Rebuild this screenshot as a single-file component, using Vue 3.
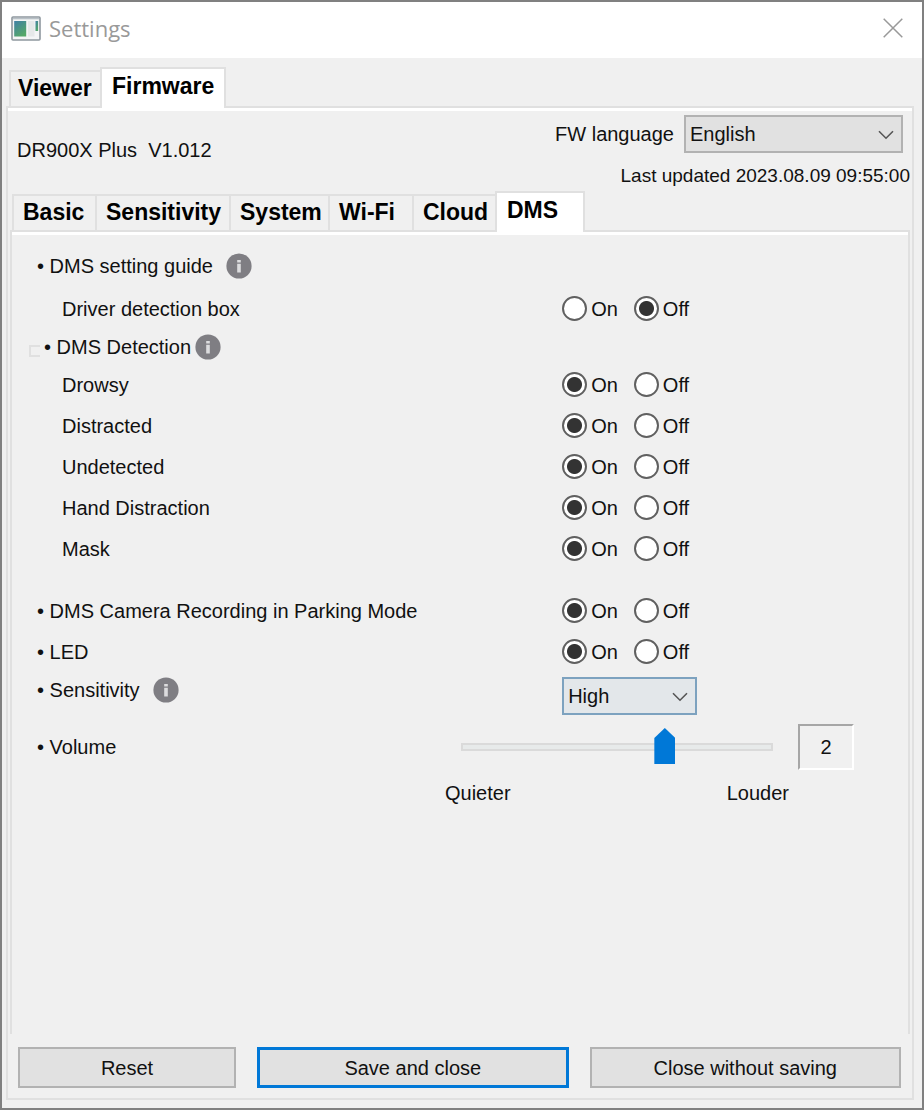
<script setup>
import { ref, reactive } from 'vue'

const mainTabs = ['Viewer', 'Firmware']
const activeMain = ref('Firmware')
const subTabs = ['Basic', 'Sensitivity', 'System', 'Wi-Fi', 'Cloud', 'DMS']
const activeSub = ref('DMS')

const language = ref('English')
const sensitivity = ref('High')
const volume = ref(2)

const rows = reactive([
  { id: 'guide', kind: 'guide', label: '• DMS setting guide', info: true },
  { id: 'box', kind: 'box', label: 'Driver detection box', value: 'Off' },
  { id: 'detection', kind: 'group', label: '• DMS Detection', info: true },
  { id: 'drowsy', kind: 'sub', label: 'Drowsy', value: 'On' },
  { id: 'distracted', kind: 'sub', label: 'Distracted', value: 'On' },
  { id: 'undetected', kind: 'sub', label: 'Undetected', value: 'On' },
  { id: 'hand', kind: 'sub', label: 'Hand Distraction', value: 'On' },
  { id: 'mask', kind: 'sub last', label: 'Mask', value: 'On' },
  { id: 'parking', kind: 'top', label: '• DMS Camera Recording in Parking Mode', value: 'On' },
  { id: 'led', kind: 'top', label: '• LED', value: 'On' },
])
</script>

<template>
  <main class="window">
    <header class="titlebar">
      <svg class="app-icon" viewBox="0 0 30 25" aria-hidden="true">
        <defs>
          <linearGradient id="screen" x1="0" y1="0" x2="0.6" y2="1">
            <stop offset="0" stop-color="#3f7fa6" />
            <stop offset="1" stop-color="#55a868" />
          </linearGradient>
        </defs>
        <rect x="1" y="1" width="28" height="23" rx="1" fill="#f4f5f6" stroke="#8f989f" stroke-width="1.6" />
        <path d="M2 2.6H28" stroke="#b9c1c7" stroke-width="1.4" />
        <rect x="3.2" y="5" width="12" height="15.5" fill="url(#screen)" />
        <rect x="17" y="5" width="6.5" height="15.5" fill="#e6e8e9" />
        <rect x="24.5" y="5" width="2.6" height="10" fill="url(#screen)" />
      </svg>
      <h1>Settings</h1>
      <button class="close" type="button" aria-label="Close">
        <svg viewBox="0 0 20 20" aria-hidden="true">
          <path d="M0.7 0.7L19.3 19.3M19.3 0.7L0.7 19.3" fill="none" stroke="#999" stroke-width="1.5" />
        </svg>
      </button>
    </header>

    <div class="body">
      <div class="tabs main-tabs" role="tablist">
        <button
          v-for="tab in mainTabs"
          :key="tab"
          type="button"
          role="tab"
          class="tab"
          :class="{ active: tab === activeMain }"
          :aria-selected="tab === activeMain"
          @click="activeMain = tab"
        >{{ tab }}</button>
      </div>

      <section class="panel outer">
        <div class="device">
          <p class="model">DR900X Plus&nbsp; V1.012</p>
          <div class="firmware">
            <div class="language">
              <label for="language">FW language</label>
              <div class="select wide">
                <select id="language" v-model="language">
                  <option>English</option>
                </select>
                <svg class="chevron" viewBox="0 0 16 10" aria-hidden="true">
                  <path d="M1 1.2L8 8.2L15 1.2" fill="none" stroke="#555" stroke-width="1.6" />
                </svg>
              </div>
            </div>
            <p class="updated">Last updated 2023.08.09 09:55:00</p>
          </div>
        </div>

        <div class="tabs sub-tabs" role="tablist">
          <button
            v-for="tab in subTabs"
            :key="tab"
            type="button"
            role="tab"
            class="tab"
            :class="{ active: tab === activeSub }"
            :aria-selected="tab === activeSub"
            @click="activeSub = tab"
          >{{ tab }}</button>
        </div>

        <section class="panel inner">
          <div v-for="row in rows" :key="row.id" class="row" :class="row.kind">
            <div class="name">
              <span v-if="row.kind === 'group'" class="bracket"></span>
              <span :id="row.id">{{ row.label }}</span>
              <svg v-if="row.info" class="info" viewBox="0 0 26 26" aria-hidden="true">
                <circle cx="13" cy="13" r="12.6" fill="#7f7e83" />
                <path d="M11.2 7H14.8V9.6H11.2ZM11.2 10.8H14.8V19.4H11.2Z" fill="#dcdcde" />
              </svg>
            </div>
            <div v-if="row.value" class="choices" role="radiogroup" :aria-labelledby="row.id">
              <label v-for="option in ['On', 'Off']" :key="option">
                <input v-model="row.value" type="radio" :name="row.id" :value="option" />
                {{ option }}
              </label>
            </div>
          </div>

          <div class="row sensitivity">
            <div class="name">
              <label for="sensitivity">• Sensitivity</label>
              <svg class="info" viewBox="0 0 26 26" aria-hidden="true">
                <circle cx="13" cy="13" r="12.6" fill="#7f7e83" />
                <path d="M11.2 7H14.8V9.6H11.2ZM11.2 10.8H14.8V19.4H11.2Z" fill="#dcdcde" />
              </svg>
            </div>
            <div class="select short">
              <select id="sensitivity" v-model="sensitivity">
                <option>High</option>
                <option>Medium</option>
                <option>Low</option>
              </select>
              <svg class="chevron" viewBox="0 0 16 10" aria-hidden="true">
                <path d="M1 1.2L8 8.2L15 1.2" fill="none" stroke="#555" stroke-width="1.6" />
              </svg>
            </div>
          </div>

          <div class="volume">
            <label for="volume">• Volume</label>
            <input id="volume" v-model.number="volume" type="range" min="0" max="3" step="1" />
            <output for="volume">{{ volume }}</output>
            <div class="scale">
              <span>Quieter</span>
              <span>Louder</span>
            </div>
          </div>
        </section>

        <footer class="actions">
          <button type="button">Reset</button>
          <button type="button" class="primary">Save and close</button>
          <button type="button">Close without saving</button>
        </footer>
      </section>
    </div>
  </main>
</template>

<style>
body {
  margin: 0;
  background: #f0f0f0;
}
</style>

<style scoped>
* {
  box-sizing: border-box;
}

.window {
  display: flex;
  flex-direction: column;
  min-height: 100vh;
  border: 2px solid #808080;
  background: #f0f0f0;
  color: #111;
  font: 20px/24px "Liberation Sans", Arial, sans-serif;
}

button,
select {
  font: inherit;
  color: inherit;
  border-radius: 0;
}

p,
h1 {
  margin: 0;
}

.titlebar {
  display: flex;
  align-items: center;
  height: 56px;
  padding: 0 19px 4px 9px;
  background: #fff;
}

.app-icon {
  width: 30px;
  height: 25px;
}

h1 {
  flex: 1;
  margin-left: 8px;
  color: #999;
  font: 400 22px/30px "Open Sans", "Noto Sans", sans-serif;
}

.close {
  display: flex;
  padding: 0;
  border: 0;
  background: none;
}

.close svg {
  width: 20px;
  height: 20px;
}

.body {
  display: flex;
  flex: 1;
  flex-direction: column;
  padding: 9px 8px 8px 4px;
}

.tabs {
  display: grid;
  align-items: end;
  height: 41px;
  margin-bottom: -2px;
}

.main-tabs {
  grid-template-columns: 91px 126px;
  padding-left: 3px;
}

.sub-tabs {
  grid-template-columns: 83px 134px 99px 84px 83px 90px;
  margin-top: 3px;
  padding-left: 4px;
}

.tab {
  height: 38px;
  padding: 0 0 2px 9px;
  border: 2px solid #e0e0e0;
  border-right-width: 0;
  background: #f0f0f0;
  color: #000;
  font-size: 23px;
  font-weight: 700;
  text-align: left;
  white-space: nowrap;
}

.main-tabs .tab {
  padding-left: 7px;
}

.tabs .tab.active {
  position: relative;
  z-index: 1;
  height: 41px;
  padding-bottom: 6px;
  padding-left: 10px;
  border-right-width: 2px;
  border-bottom: 0;
  background: #fff;
}

.panel {
  display: flex;
  flex: 1;
  flex-direction: column;
  border: 2px solid #e0e0e0;
  box-shadow: inset 0 3px #fff;
}

.device {
  display: flex;
  align-items: center;
  justify-content: space-between;
  padding: 7px 2px 0 9px;
}

.model {
  padding-bottom: 3px;
}

.firmware {
  display: flex;
  flex-direction: column;
  align-items: flex-end;
  gap: 11px;
}

.language {
  display: flex;
  align-items: center;
  gap: 10px;
  padding-right: 7px;
}

.updated {
  font-size: 19px;
}

.select {
  position: relative;
  height: 38px;
}

.wide {
  width: 219px;
}

.short {
  width: 135px;
}

select {
  appearance: none;
  width: 100%;
  height: 100%;
  padding: 0 32px 0 4px;
  border: 2px solid #b2b2b2;
  background: #e1e1e1;
}

.short select {
  border-color: #7da2bf;
  background: #e3e7ea;
}

.chevron {
  position: absolute;
  top: 15px;
  right: 9px;
  width: 16px;
  height: 10px;
  pointer-events: none;
}

.inner {
  margin: 0 2px;
  padding-top: 13px;
  border-bottom: 0;
}

.row {
  display: grid;
  grid-template-columns: 8fr 5fr;
  align-items: center;
  height: 41px;
  padding-right: 2px;
}

.name {
  display: flex;
  align-items: center;
  gap: 13px;
  padding-left: 25px;
}

.guide {
  height: 42px;
}

.box {
  height: 43px;
}

.box .name,
.sub .name {
  padding-left: 50px;
}

.last {
  margin-bottom: 21px;
}

.group {
  height: 34px;
}

.group .name {
  gap: 4px;
  padding-left: 17px;
}

.bracket {
  width: 11px;
  height: 12px;
  margin-top: 8px;
  border: 2px solid #e0e0e0;
  border-right: 0;
}

.info {
  width: 26px;
  height: 26px;
}

.choices {
  display: flex;
  gap: 16px;
}

.choices label {
  display: flex;
  align-items: center;
  gap: 4px;
}

input[type='radio'] {
  appearance: none;
  width: 25px;
  height: 25px;
  margin: 0;
  border: 2px solid #606060;
  border-radius: 50%;
  background: #fff;
}

input[type='radio']:checked {
  background: radial-gradient(circle, #333 7px, #fff 8px);
}

.sensitivity {
  height: 47px;
}

.sensitivity .name {
  padding-bottom: 12px;
}

.volume {
  display: grid;
  grid-template-columns: 1fr 344px 56px;
  grid-template-rows: 56px 36px;
  column-gap: 9px;
  align-items: center;
  padding: 0 54px 0 25px;
}

input[type='range'] {
  appearance: none;
  height: 36px;
  margin: 0 16px;
  background: none;
}

input[type='range']::-webkit-slider-runnable-track {
  height: 8px;
  border: 2px solid #dadada;
  background: #e7eaea;
}

input[type='range']::-webkit-slider-thumb {
  appearance: none;
  width: 21px;
  height: 36px;
  margin-top: -17px;
  background: #0078d7;
  clip-path: polygon(50% 0, 100% 28%, 100% 100%, 0 100%, 0 28%);
}

output {
  display: flex;
  align-items: center;
  justify-content: center;
  height: 46px;
  border: 2px solid;
  border-color: #a6a6a6 #fff #fff #a6a6a6;
}

.scale {
  display: flex;
  grid-column: 2;
  justify-content: space-between;
}

.actions {
  display: grid;
  grid-template-columns: 7fr 10fr 10fr;
  gap: 21px;
  padding: 13px 11px 10px 10px;
}

.actions button {
  height: 41px;
  border: 2px solid #b2b2b2;
  background: #e1e1e1;
}

.actions .primary {
  border: 3px solid #0078d7;
}
</style>
